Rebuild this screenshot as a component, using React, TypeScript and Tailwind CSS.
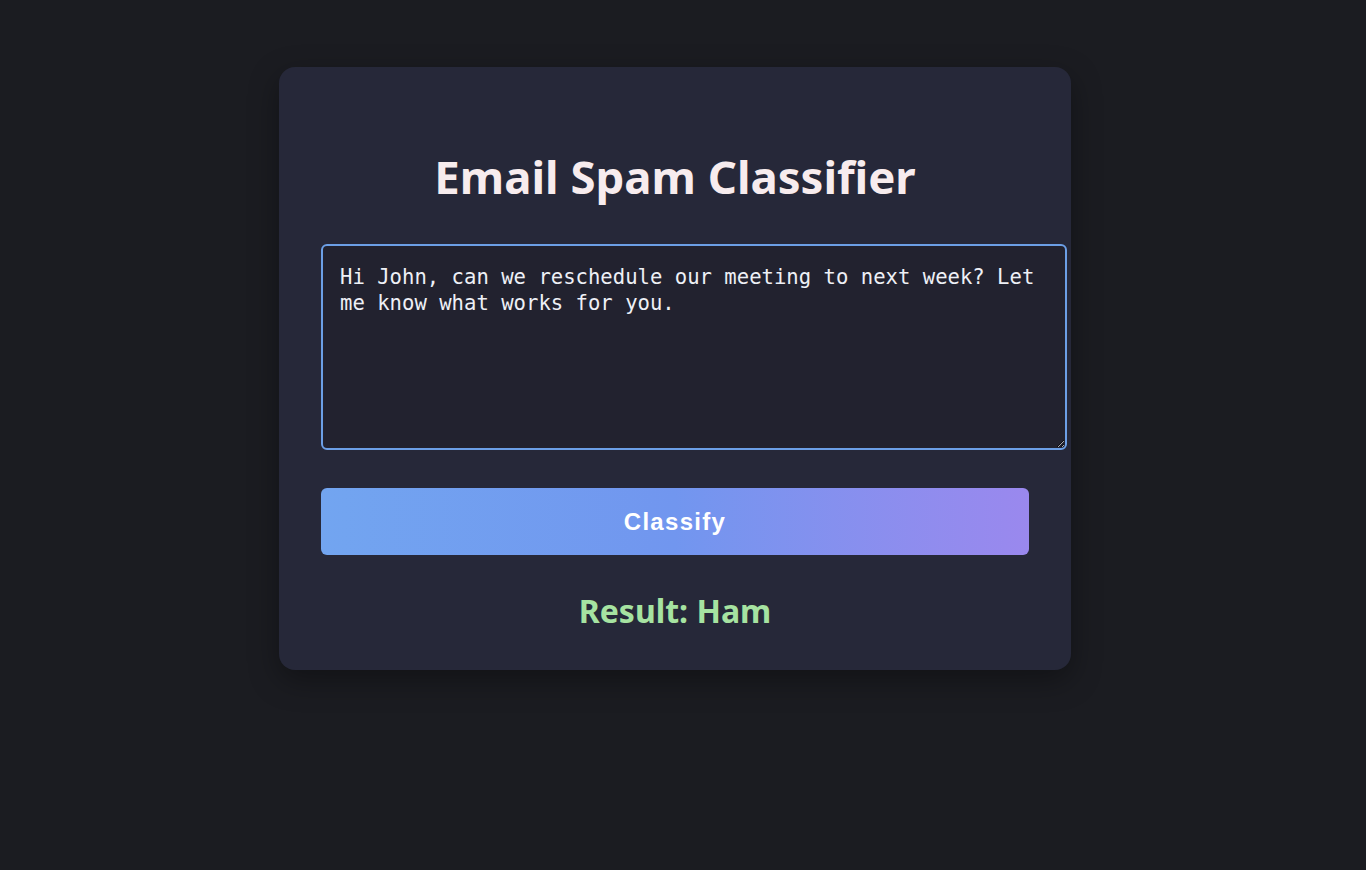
import React, { useState } from 'react';

export default function App() {
  const [text, setText] = useState(
    'Hi John, can we reschedule our meeting to next week? Let me know what works for you.'
  );

  return (
    <div className="min-h-screen w-full bg-[#1b1c21] flex justify-center pt-[67px] pr-[16px]" style={{ fontFamily: '"Noto Sans", "Open Sans", sans-serif' }}>
      {/* card */}
      <div className="w-[792px] h-[603px] rounded-2xl bg-[#262839] shadow-[0_10px_30px_rgba(0,0,0,0.35)] px-[42px] pt-[79px]">
        <h1 className="text-center text-[45.5px] leading-[60px] font-bold text-[#f7ecee]">
          Email Spam Classifier
        </h1>

        <textarea
          value={text}
          onChange={(e) => setText(e.target.value)}
          className="mt-[38px] block w-[746px] h-[206px] box-border rounded-md border-2 border-[#6c9fe6] bg-[#22222f] px-[17px] py-[18px] text-[20.6px] leading-[26px] text-[#eef0f6] outline-none resize-y"
          style={{ fontFamily: '"DejaVu Sans Mono", "Liberation Mono", monospace' }}
        />

        <button className="mt-[38px] w-full h-[67px] rounded-md bg-gradient-to-r from-[#72a5f0] via-[#7196ef] to-[#9a88ee] text-white text-[24px] font-bold tracking-[1.3px]" style={{ fontFamily: '"Liberation Sans", Arial, sans-serif' }}>
          Classify
        </button>

        <div className="mt-[35px] text-center text-[32px] leading-[42px] font-bold text-[#a6e3a1]">
          Result: Ham
        </div>
      </div>
    </div>
  );
}
